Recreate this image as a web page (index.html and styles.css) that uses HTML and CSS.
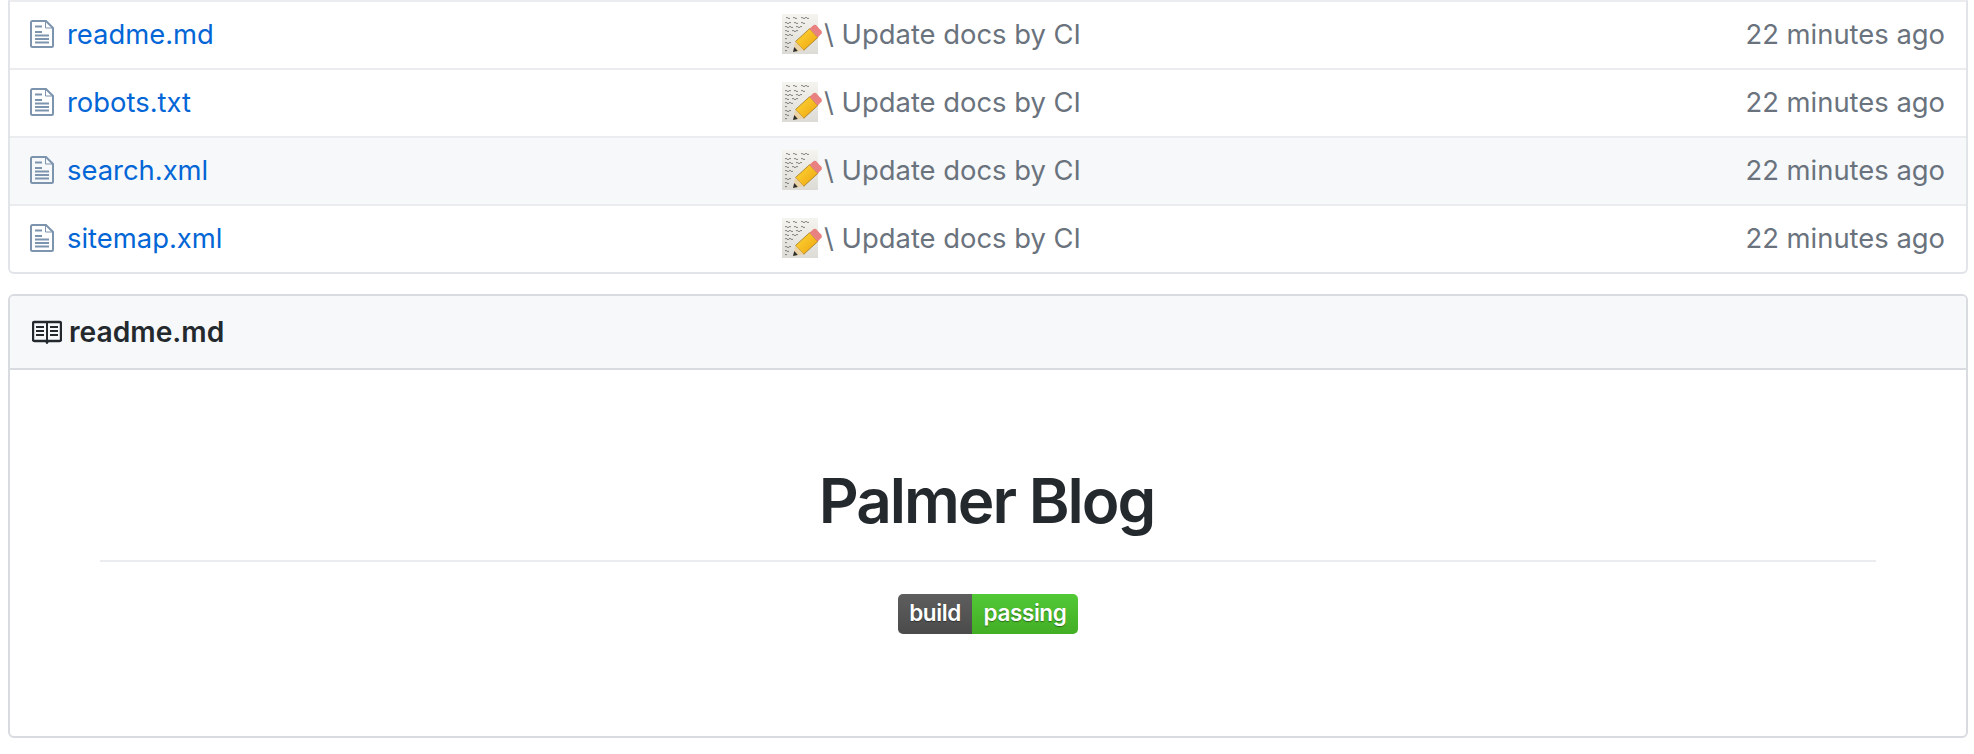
FILE: index.html

```html
<!DOCTYPE html>
<html lang="en">
<head>
  <meta charset="utf-8">
  <title>readme.md</title>
  <link rel="stylesheet" href="styles.css">
</head>
<body>
  <svg class="defs" width="0" height="0">
    <symbol id="file-icon" viewBox="0 0 24 28">
      <path d="M2.500 1h13.500L23 8v17.500a1.500 1.500 0 0 1-1.500 1.500h-19A1.500 1.500 0 0 1 1 25.500v-23A1.500 1.500 0 0 1 2.500 1z" fill="none" stroke="#7d94ae" stroke-width="2"/>
      <path d="M15.500 1.500v6.500H22" fill="none" stroke="#7d94ae" stroke-width="1"/>
      <path d="M5 6.500h7M5 12h7M5 15.500h14M5 19h14M5 22.500h14" stroke="#7d94ae" stroke-width="1.800"/>
    </symbol>
    <symbol id="memo-icon" viewBox="0 0 42 40" overflow="visible">
      <defs>
        <linearGradient id="paper" x1="0" y1="0" x2="0" y2="1">
          <stop offset="0" stop-color="#f6f4ee"/>
          <stop offset="1" stop-color="#dddbd5"/>
        </linearGradient>
        <linearGradient id="wood" x1="0" y1="0" x2="1" y2="1">
          <stop offset="0" stop-color="#ffd93a"/>
          <stop offset="1" stop-color="#eda20c"/>
        </linearGradient>
      </defs>
      <rect width="36" height="40" fill="url(#paper)"/>
      <path d="M4 4q1-1.500 2 0t2 0M11 4q1-1.500 2 0t2 0M19 4q1-1.500 2 0t2 0 2 0 2 0M3 9q1-1.500 2 0t2 0 2 0M12 9q1-1.500 2 0t2 0M19 9q1-1.500 2 0t2 0M3 13q1-1.500 2 0t2 0 2 0 2 0M14 13q1-1.500 2 0t2 0 2 0M3 17q1-1.500 2 0t2 0M10 17q1-1.500 2 0t2 0 2 0M3 21q1-1.500 2 0t2 0 2 0 2 0M3 25q1-1.500 2 0M3 29q1-1.500 2 0t2 0 2 0M3 33q1-1.500 2 0t2 0M3 37q1-1.500 2 0" fill="none" stroke="#555" stroke-width="0.700"/>
      <path d="M27.600 14.700L35.800 23.500 21.700 36.300 13.500 27.500z" fill="url(#wood)" stroke="#9a6c10" stroke-width="0.700"/>
      <path d="M27.600 14.700L30.800 11.800A3 3 0 0 1 35 12L38 15.400A3 3 0 0 1 38.400 20.800L35.800 23.500z" fill="#e8817f"/>
      <path d="M13.500 27.500L21.700 36.300 11 38z" fill="#ecd3a5"/>
      <path d="M12.300 33L15.800 37 11 38z" fill="#2f2f2f"/>
    </symbol>
  </svg>

  <div class="files">
    <div class="file-row">
      <svg class="file-icon"><use href="#file-icon"/></svg>
      <a class="file-name" href="#">readme.md</a>
      <span class="commit"><svg class="memo"><use href="#memo-icon"/></svg> \ Update docs by CI</span>
      <span class="age">22 minutes ago</span>
    </div>
    <div class="file-row">
      <svg class="file-icon"><use href="#file-icon"/></svg>
      <a class="file-name" href="#">robots.txt</a>
      <span class="commit"><svg class="memo"><use href="#memo-icon"/></svg> \ Update docs by CI</span>
      <span class="age">22 minutes ago</span>
    </div>
    <div class="file-row hover">
      <svg class="file-icon"><use href="#file-icon"/></svg>
      <a class="file-name" href="#">search.xml</a>
      <span class="commit"><svg class="memo"><use href="#memo-icon"/></svg> \ Update docs by CI</span>
      <span class="age">22 minutes ago</span>
    </div>
    <div class="file-row">
      <svg class="file-icon"><use href="#file-icon"/></svg>
      <a class="file-name" href="#">sitemap.xml</a>
      <span class="commit"><svg class="memo"><use href="#memo-icon"/></svg> \ Update docs by CI</span>
      <span class="age">22 minutes ago</span>
    </div>
  </div>

  <div class="readme">
    <div class="readme-head">
      <svg class="book-icon" viewBox="0 0 30 24">
        <path d="M14 2H2.500A1.500 1.500 0 0 0 1 3.500v16A1.500 1.500 0 0 0 2.500 21H14l1 1.500 1-1.500h11.500a1.500 1.500 0 0 0 1.500-1.500v-16A1.500 1.500 0 0 0 27.500 2H16z" fill="none" stroke="#24292e" stroke-width="2.400"/>
        <path d="M15 2v19" stroke="#24292e" stroke-width="2"/>
        <path d="M4 7h8M4 11h8M4 15h8M18 7h8M18 11h8M18 15h8" stroke="#24292e" stroke-width="2.200"/>
      </svg>
      <span>readme.md</span>
    </div>
    <div class="markdown">
      <h1>Palmer Blog</h1>
      <div class="badge"><span class="badge-key">build</span><span class="badge-val">passing</span></div>
    </div>
  </div>
</body>
</html>
```

FILE: styles.css

```css
body {
  margin: 0;
  padding: 0 6px 0 8px;
  font-family: Inter, "Liberation Sans", sans-serif;
  background-color: #fff;
  color: #24292e;
}
.defs {
  display: block;
  height: 0;
}
.files {
  border: 2px solid #e1e4e8;
  border-top: 2px solid #eaecef;
  border-radius: 0 0 6px 6px;
}
.file-row {
  display: flex;
  align-items: center;
  height: 64px;
  padding-bottom: 2px;
  border-top: 2px solid #eaecef;
  font-size: 27.4px;
}
.file-row:first-child {
  border-top: 0;
}
.file-row.hover {
  background-color: #f6f8fa;
}
.file-icon {
  width: 24px;
  height: 28px;
  margin-left: 20px;
  flex-shrink: 0;
}
.file-name {
  width: 715px;
  margin-left: 13px;
  color: #0366d6;
  text-decoration: none;
}
.commit {
  display: flex;
  align-items: center;
  gap: 6px;
  color: #6a737d;
}
.memo {
  width: 42px;
  height: 40px;
  margin-right: -6px;
}
.age {
  margin-left: auto;
  margin-right: 21px;
  color: #6a737d;
}
.readme {
  height: 440px;
  margin-top: 20px;
  border: 2px solid #d8dbdf;
  border-radius: 6px;
}
.readme-head {
  display: flex;
  align-items: center;
  gap: 7px;
  height: 72px;
  padding-left: 22px;
  border-bottom: 2px solid #d8dbdf;
  background-color: #f6f8fa;
  font-size: 28.2px;
  font-weight: 600;
  border-radius: 4px 4px 0 0;
}
.book-icon {
  width: 30px;
  height: 24px;
}
.markdown {
  padding: 0 90px;
  text-align: center;
}
.markdown h1 {
  margin: 0;
  padding: 92px 3px 20px 0;
  border-bottom: 2px solid #eaecef;
  font-size: 62px;
  font-weight: 600;
  line-height: 78px;
  letter-spacing: -2px;
}
.badge {
  display: inline-flex;
  height: 40px;
  margin-top: 32px;
  border-radius: 5px;
  overflow: hidden;
  color: #fff;
  font-size: 22.5px;
  font-weight: 600;
  letter-spacing: -0.4px;
  line-height: 38px;
  text-shadow: 0 1px 1px rgba(0, 0, 0, 0.4);
}
.badge-key {
  width: 74px;
  background: linear-gradient(#5e5e5e, #4b4b4b);
}
.badge-val {
  width: 106px;
  background: linear-gradient(#52c936, #42ae24);
}
```
